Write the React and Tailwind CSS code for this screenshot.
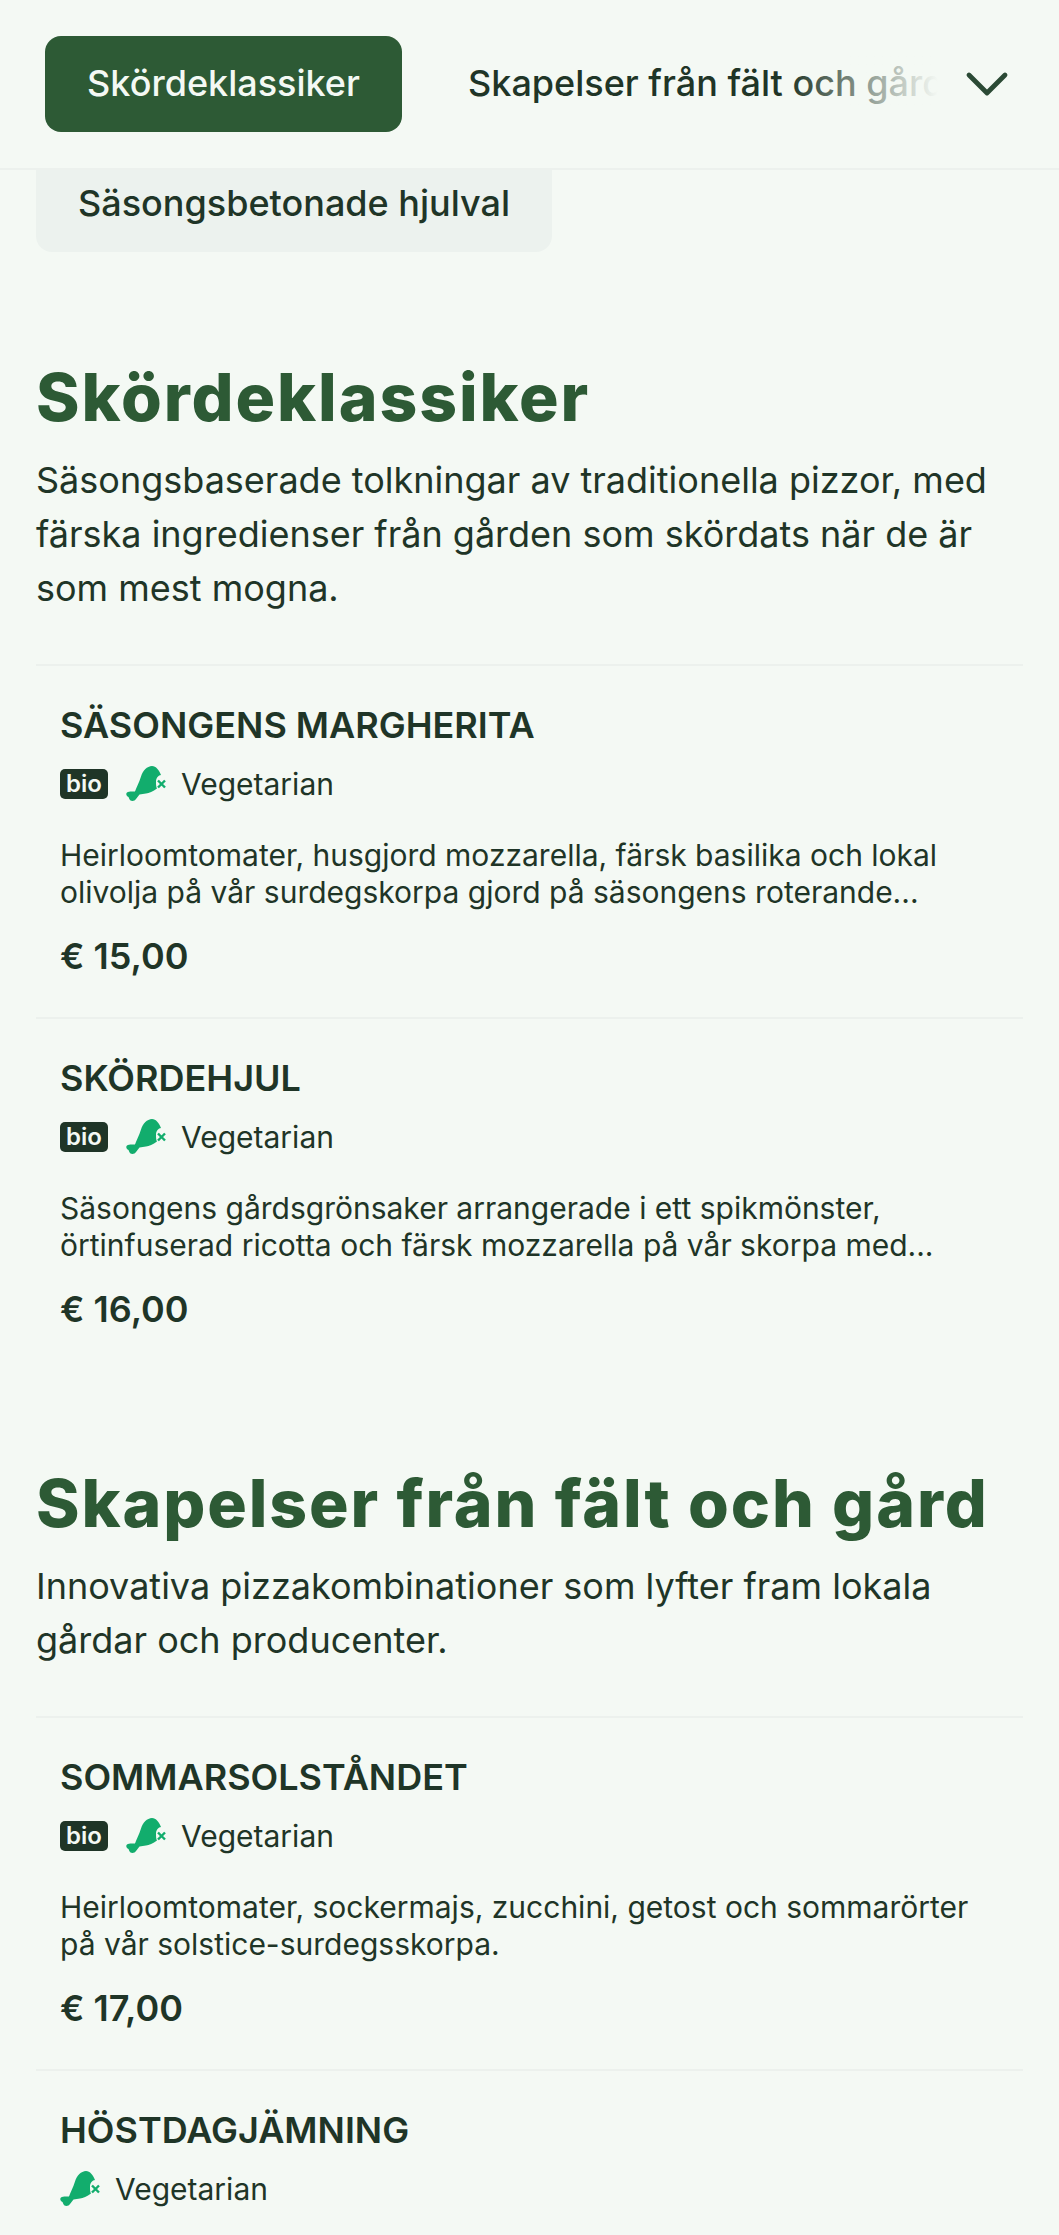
import { ChevronDown } from 'lucide-react';

const sections = [
  {
    title: 'Skördeklassiker',
    intro: 'Säsongsbaserade tolkningar av traditionella pizzor, med färska ingredienser från gården som skördats när de är som mest mogna.',
    items: [
      {
        name: 'SÄSONGENS MARGHERITA',
        bio: true,
        desc: 'Heirloomtomater, husgjord mozzarella, färsk basilika och lokal olivolja på vår surdegskorpa gjord på säsongens roterande...',
        price: '€ 15,00',
      },
      {
        name: 'SKÖRDEHJUL',
        bio: true,
        desc: 'Säsongens gårdsgrönsaker arrangerade i ett spikmönster, örtinfuserad ricotta och färsk mozzarella på vår skorpa med...',
        price: '€ 16,00',
      },
    ],
  },
  {
    title: 'Skapelser från fält och gård',
    intro: 'Innovativa pizzakombinationer som lyfter fram lokala gårdar och producenter.',
    items: [
      {
        name: 'SOMMARSOLSTÅNDET',
        bio: true,
        desc: 'Heirloomtomater, sockermajs, zucchini, getost och sommarörter på vår solstice-surdegsskorpa.',
        price: '€ 17,00',
      },
      { name: 'HÖSTDAGJÄMNING', bio: false, vegOnly: true },
    ],
  },
];

function NoMeatIcon() {
  return (
    <svg width="41" height="36" viewBox="0 -1 41 36" className="shrink-0">
      <path
        d="M26 -1C30 -1 33 3 35 8C32.5 8 30 11 30 14.5C30 17.5 30 20 31 21.5C27 24.5 23 26 20 26.5L13.5 27.5L10 32C9 34 6 34.5 4.5 33.5C3 32 3 31 2.5 30C0.5 29.5 -0.5 26.5 1 25.5C3 24 6 24.5 9 24.5C10.5 20 13 16 15 9.5C17 3 21 -0.5 26 -1Z"
        fill="#12ad6d"
      />
      <path d="M32 13.5L39 20.5M39 13.5L32 20.5" stroke="#12ad6d" strokeWidth="2.4" />
    </svg>
  );
}

function MenuItem({ item }) {
  return (
    <div className="border-t-2 border-[#ecf1ed] px-6 pt-[34px] pb-[36px]">
      <h3 className="text-[36px] leading-[50px] font-semibold text-[#1f3527]">{item.name}</h3>
      <div className="flex items-center mt-[12px] h-[44px]">
        {item.bio && (
          <span className="w-[48px] h-[30px] mr-[18px] rounded-[5px] bg-[#1f3527] text-[#f4f9f4] text-[24px] font-semibold leading-[30px] text-center">bio</span>
        )}
        <NoMeatIcon />
        <span className="ml-[14px] text-[30px] text-[#1f3527]">Vegetarian</span>
      </div>
      {!item.vegOnly && (
        <>
          <p className="mt-[31px] text-[30px] leading-[37px] text-[#1f3527]">{item.desc}</p>
          <p className="mt-[20px] text-[36px] leading-[50px] font-semibold text-[#1f3527]">{item.price}</p>
        </>
      )}
    </div>
  );
}

export default function App() {
  return (
    <div className="w-[1059px] h-[2235px] overflow-hidden bg-[#f4f9f4] font-['Inter',sans-serif]">
      <div className="h-[170px] flex items-center border-b-2 border-[#ecf1ed] pl-[45px] pr-[36px]">
        <button className="w-[357px] h-[96px] shrink-0 rounded-[16px] bg-[#2d5a35] text-[#f4f9f4] text-[36px] font-medium pb-[2px]">
          Skördeklassiker
        </button>
        <div className="relative ml-[66px] w-[470px] overflow-hidden whitespace-nowrap text-[36px] font-medium text-[#1f3527] pb-[2px]">
          Skapelser från fält och gård
          <div className="absolute inset-y-0 right-0 w-[150px] bg-gradient-to-r from-transparent to-[#f4f9f4]" />
        </div>
        <ChevronDown className="ml-auto text-[#2b4a35]" size={72} strokeWidth={1.6} />
      </div>

      <div className="px-[36px]">
        <div className="w-[516px] h-[82px] rounded-b-[16px] bg-[#ecf2ee] flex items-center pl-[42px] pb-[16px] text-[36px] font-medium text-[#1f3527]">
          Säsongsbetonade hjulval
        </div>

        {sections.map((section, i) => (
          <section key={section.title} className={i === 0 ? 'mt-[105px]' : 'mt-[93px]'}>
            <h2 className="text-[66px] leading-[80px] tracking-[1.9px] font-extrabold text-[#2d5a35]">{section.title}</h2>
            <p className="mt-[16px] text-[36px] leading-[54px] text-[#1f3527]">{section.intro}</p>
            <div className="mt-[49px]">
              {section.items.map((item) => (
                <MenuItem key={item.name} item={item} />
              ))}
            </div>
          </section>
        ))}
      </div>
    </div>
  );
}
